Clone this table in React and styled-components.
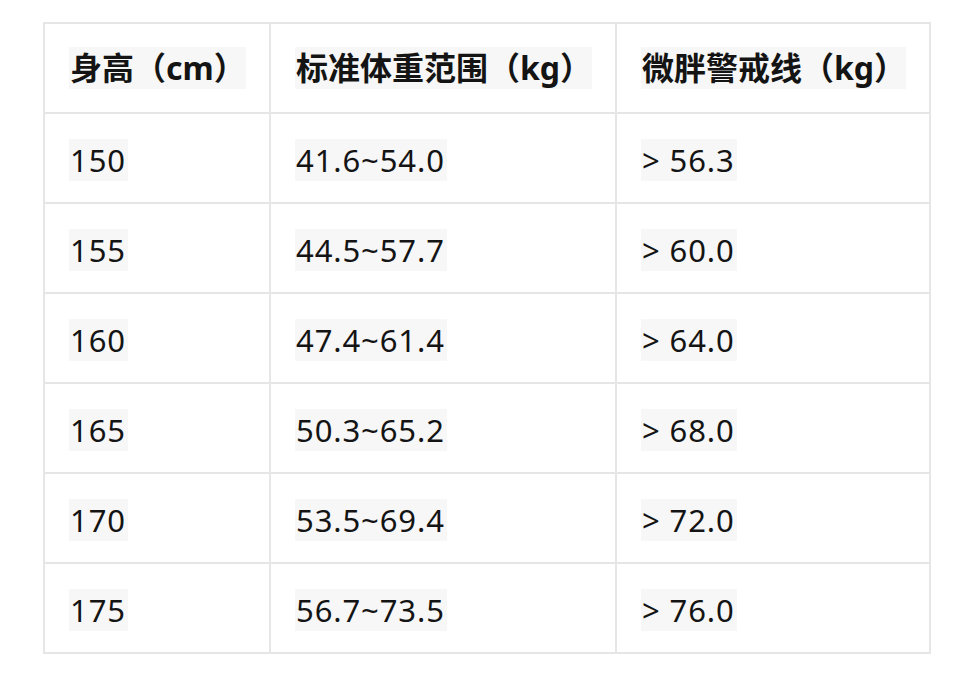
import React from 'react';
import styled, { createGlobalStyle } from 'styled-components';

const GlobalStyle = createGlobalStyle`
  html, body {
    margin: 0;
    background: #ffffff;
  }
`;

const Page = styled.div`
  padding: 22px 0 0 43px;
  font-family: "Noto Sans", "Noto Sans CJK SC", sans-serif;
  color: #141414;
`;

const Table = styled.table`
  border-collapse: collapse;
  table-layout: fixed;
  width: 888px;
`;

const Col = styled.col`
  width: ${(props) => props.w}px;
`;

const Cell = styled.td`
  border: 2px solid #e6e6e6;
  height: ${(props) => (props.head ? 86 : 84)}px;
  padding: ${(props) => (props.head ? '0 0 2px 24px' : '4px 0 0 24px')};
  vertical-align: middle;
  font-size: ${(props) => (props.head ? 32 : 31)}px;
  font-weight: ${(props) => (props.head ? 700 : 400)};
  letter-spacing: ${(props) => (props.head ? '0' : '0.9px')};
`;

const Mark = styled.span`
  display: inline-block;
  background: #f7f7f7;
  line-height: 42px;
  padding: 0 ${(props) => props.tail ?? 2}px 0 1px;
`;

const head = [
  { text: '身高（cm）', tail: 0 },
  { text: '标准体重范围（kg）', tail: 0 },
  { text: '微胖警戒线（kg）', tail: 0 },
];

const rows = [
  ['150', '41.6~54.0', '> 56.3'],
  ['155', '44.5~57.7', '> 60.0'],
  ['160', '47.4~61.4', '> 64.0'],
  ['165', '50.3~65.2', '> 68.0'],
  ['170', '53.5~69.4', '> 72.0'],
  ['175', '56.7~73.5', '> 76.0'],
];

export default function App() {
  return (
    <Page>
      <GlobalStyle />
      <Table>
        <colgroup>
          <Col w={226} />
          <Col w={346} />
          <Col w={314} />
        </colgroup>
        <tbody>
          <tr>
            {head.map((h) => (
              <Cell head key={h.text}>
                <Mark tail={h.tail}>{h.text}</Mark>
              </Cell>
            ))}
          </tr>
          {rows.map((r) => (
            <tr key={r[0]}>
              {r.map((v) => (
                <Cell key={v}>
                  <Mark>{v}</Mark>
                </Cell>
              ))}
            </tr>
          ))}
        </tbody>
      </Table>
    </Page>
  );
}
